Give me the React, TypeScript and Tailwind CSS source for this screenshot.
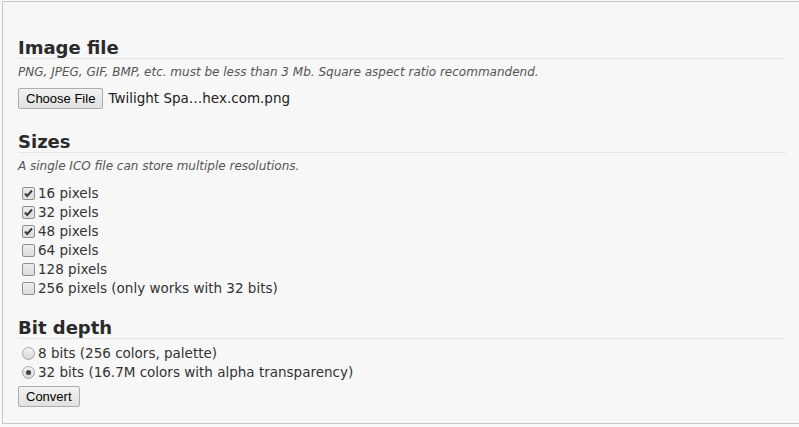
import React from "react";

function Check({ checked }: { checked: boolean }) {
  return (
    <span className="relative inline-block w-[13px] h-[13px] mr-[3px] rounded-[2px] border border-[#8e8f8f] bg-gradient-to-b from-[#ededed] to-[#dcdcdc] shrink-0">
      {checked && (
        <svg viewBox="0 0 13 13" className="absolute -left-px -top-px w-[13px] h-[13px]">
          <path d="M3 6.5 L5.2 9 L10 3.5" fill="none" stroke="#3a3a3a" strokeWidth="2" />
        </svg>
      )}
    </span>
  );
}

function Radio({ checked }: { checked: boolean }) {
  return (
    <span className="relative inline-flex items-center justify-center w-[13px] h-[13px] mr-[3px] rounded-full border border-[#a5a5a5] bg-gradient-to-b from-[#f4f4f4] to-[#d8d8d8] shrink-0">
      {checked && <span className="w-[5px] h-[5px] rounded-full bg-[#444]" />}
    </span>
  );
}

function Heading({ children }: { children: React.ReactNode }) {
  return (
    <h2 className="text-[18px] leading-[20px] font-bold text-[#2a2a2a] border-b border-[#e6e6e6] mr-[13px]">
      {children}
    </h2>
  );
}

const sizes = [
  { label: "16 pixels", checked: true },
  { label: "32 pixels", checked: true },
  { label: "48 pixels", checked: true },
  { label: "64 pixels", checked: false },
  { label: "128 pixels", checked: false },
  { label: "256 pixels (only works with 32 bits)", checked: false },
];

const btn =
  "font-['Liberation_Sans',Arial,sans-serif] text-[13px] leading-[18px] text-black px-[7px] border border-[#adadad] rounded-[2px] bg-gradient-to-b from-[#f2f2f2] to-[#e1e1e1]";

export default function App() {
  return (
    <div className="w-[799px] h-[427px] bg-[#f9f9f9] pt-[1px] pl-[2px] font-['DejaVu_Sans',Verdana,sans-serif]">
      <div className="h-[423px] bg-[#f7f7f7] border border-r-0 border-[#c8c8c8] pl-[15px] pt-[36px]">
        <Heading>Image file</Heading>
        <p className="italic text-[12px] leading-[16px] text-[#555] mt-[5px]">
          PNG, JPEG, GIF, BMP, etc. must be less than 3 Mb. Square aspect ratio recommandend.
        </p>
        <div className="flex items-center mt-[8px] h-[21px]">
          <button className={btn + " h-[21px]"}>Choose File</button>
          <span className="ml-[5px] text-[13.5px] text-[#222]">Twilight Spa…hex.com.png</span>
        </div>

        <div className="mt-[23px]">
          <Heading>Sizes</Heading>
        </div>
        <p className="italic text-[12px] leading-[16px] text-[#555] mt-[5px]">
          A single ICO file can store multiple resolutions.
        </p>
        <div className="mt-[10px] flex flex-col">
          {sizes.map((s) => (
            <label key={s.label} className="flex items-center h-[19px] pl-[4px] text-[13.5px] text-[#333]">
              <Check checked={s.checked} />
              {s.label}
            </label>
          ))}
        </div>

        <div className="mt-[20px]">
          <Heading>Bit depth</Heading>
        </div>
        <div className="mt-[5px] flex flex-col">
          <label className="flex items-center h-[19px] pl-[4px] text-[13.5px] text-[#333]">
            <Radio checked={false} />8 bits (256 colors, palette)
          </label>
          <label className="flex items-center h-[19px] pl-[4px] text-[13.5px] text-[#333]">
            <Radio checked={true} />32 bits (16.7M colors with alpha transparency)
          </label>
        </div>
        <button className={btn + " h-[21px] mt-[4px]"}>Convert</button>
      </div>
    </div>
  );
}
